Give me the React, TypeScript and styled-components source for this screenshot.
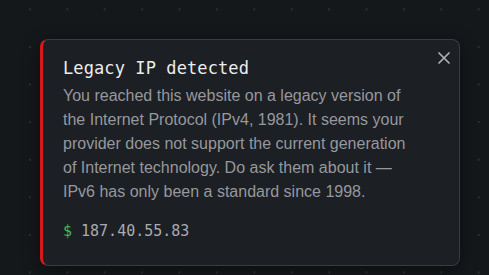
import React from "react";
import styled, { createGlobalStyle } from "styled-components";

const Global = createGlobalStyle`
  html, body { margin: 0; padding: 0; }
  body {
    width: 489px;
    height: 275px;
    overflow: hidden;
    background-color: #15181b;
    background-image: radial-gradient(circle, #2a2e32 0.9px, transparent 1.3px);
    background-size: 37.4px 37.6px;
    background-position: 11.3px -9.5px;
  }
`;

const Page = styled.div`
  padding: 39px 29px 0 40px;
  box-sizing: border-box;
  width: 489px;
  height: 275px;
`;

const Card = styled.section`
  position: relative;
  box-sizing: border-box;
  width: 420px;
  height: 227px;
  background: #1c1f24;
  border: 1px solid #383b41;
  border-left: 3px solid #d8191c;
  border-radius: 8px;
  padding: 16px 44px 0 20px;
  box-shadow: 0 4px 18px rgba(0, 0, 0, 0.45);
`;

const Title = styled.h2`
  margin: 0;
  font-family: "DejaVu Sans Mono", "Liberation Mono", monospace;
  font-size: 17px;
  font-weight: 500;
  line-height: 24px;
  color: #ececec;
  letter-spacing: 0.1px;
`;

const Body = styled.p`
  margin: 4px 0 0;
  font-family: "Liberation Sans", Arial, sans-serif;
  font-size: 16px;
  line-height: 24px;
  color: #96989c;
`;

const Address = styled.div`
  margin-top: 15px;
  font-family: "DejaVu Sans Mono", "Liberation Mono", monospace;
  font-size: 15px;
  line-height: 24px;
  color: #a9abae;
`;

const Prompt = styled.span`
  color: #3fb950;
  margin-right: 0.6em;
`;

const Close = styled.button`
  position: absolute;
  top: 8px;
  right: 5px;
  width: 20px;
  height: 20px;
  padding: 0;
  border: 0;
  background: transparent;
  display: flex;
  align-items: center;
  justify-content: center;
  cursor: pointer;
  color: #aeb0b3;
`;

export default function App() {
  return (
    <>
      <Global />
      <Page>
        <Card>
          <Close aria-label="Close">
            <svg width="12" height="12" viewBox="0 0 12 12">
              <path d="M1 1 L11 11 M11 1 L1 11" stroke="currentColor" strokeWidth="1.7" strokeLinecap="round" />
            </svg>
          </Close>
          <Title>Legacy IP detected</Title>
          <Body>
            You reached this website on a legacy version of the Internet Protocol (IPv4, 1981). It seems your
            provider does not support the current generation of Internet technology. Do ask them about it —
            IPv6 has only been a standard since 1998.
          </Body>
          <Address>
            <Prompt>$</Prompt>187.40.55.83
          </Address>
        </Card>
      </Page>
    </>
  );
}
